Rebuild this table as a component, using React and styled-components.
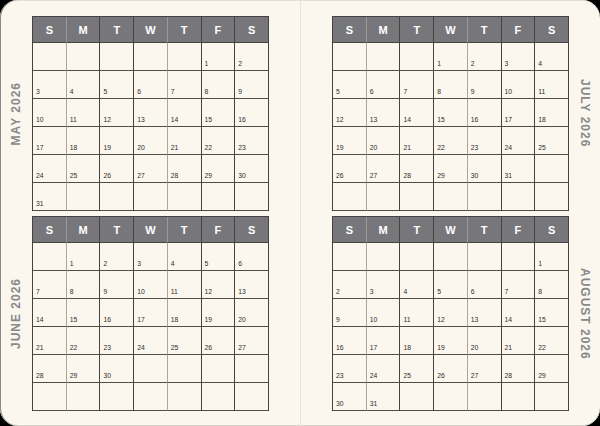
import React from "react";
import styled, { createGlobalStyle } from "styled-components";

const Global = createGlobalStyle`
  html, body { margin: 0; padding: 0; background: #000; }
  body { font-family: "Liberation Sans", Arial, sans-serif; }
  #root { width: 600px; height: 426px; }
`;

const Spread = styled.div`
  width: 600px;
  height: 426px;
  box-sizing: border-box;
  background: #fcf7ee;
  border-radius: 18px;
  display: flex;
  overflow: hidden;
  box-shadow: inset 1px 0 0 #8d8a85, inset 0 1px 0 #e4dfd6, inset 0 -1px 0 #d8d3ca;
`;

const Page = styled.div`
  width: ${(p) => p.$w}px;
  display: flex;
  flex-direction: ${(p) => (p.$side === "left" ? "row" : "row-reverse")};
  padding-${(p) => (p.$side === "left" ? "right" : "left")}: 31px;
  box-sizing: border-box;
`;

const Fold = styled.div`
  width: 1px;
  background: #e9e3d8;
`;

const LabelCol = styled.div`
  width: ${(p) => p.$w}px;
  display: flex;
  flex-direction: column;
  padding-top: 16px;
  gap: 5px;
`;

const LabelSlot = styled.div`
  height: 195px;
  display: flex;
  align-items: center;
  justify-content: center;
`;

const MonthLabel = styled.div`
  writing-mode: vertical-rl;
  transform: ${(p) => (p.$side === "left" ? "rotate(180deg)" : "none")};
  font-family: "Liberation Sans", Arial, sans-serif;
  font-weight: 700;
  font-size: 12px;
  letter-spacing: 1px;
  color: #88888b;
  white-space: nowrap;
`;

const Grids = styled.div`
  width: 237px;
  display: flex;
  flex-direction: column;
  padding-top: 16px;
  gap: 5px;
`;

const Table = styled.div`
  display: grid;
  grid-template-columns: repeat(7, 1fr);
  border-left: 1px solid #46433f;
  border-top: 1px solid #46433f;
`;

const HeadCell = styled.div`
  height: 25px;
  background: #77777b;
  color: #fff;
  font-weight: 700;
  font-size: 11px;
  display: flex;
  align-items: center;
  justify-content: center;
  border-right: 1px solid ${(p) => (p.$light ? "#9b9a98" : "#46433f")};
  border-bottom: 1px solid #46433f;
`;

const DayCell = styled.div`
  border-right: 1px solid ${(p) => (p.$light ? "#aaa69e" : "#46433f")};
  border-bottom: 1px solid #504d48;
  display: flex;
  align-items: flex-end;
  padding: 0 0 2px 3px;
  box-sizing: content-box;
  height: 25px;
  font-size: 6.8px;
  line-height: 1;
  color: #2e2c2a;
`;

const DAYS = ["S", "M", "T", "W", "T", "F", "S"];

function Month({ start, days }) {
  const cells = [];
  for (let i = 0; i < 42; i++) {
    const d = i - start + 1;
    cells.push(d >= 1 && d <= days ? d : "");
  }
  return (
    <Table>
      {DAYS.map((d, i) => (
        <HeadCell key={"h" + i} $light={i === 0 || i === 3}>
          {d}
        </HeadCell>
      ))}
      {cells.map((c, i) => (
        <DayCell key={i} $light={i % 7 === 0 || i % 7 === 3}>
          {c}
        </DayCell>
      ))}
    </Table>
  );
}

export default function App() {
  return (
    <>
      <Global />
      <Spread>
        <Page $w={300} $side="left">
          <LabelCol $w={32}>
            <LabelSlot>
              <MonthLabel $side="left">MAY 2026</MonthLabel>
            </LabelSlot>
            <LabelSlot>
              <MonthLabel $side="left">JUNE 2026</MonthLabel>
            </LabelSlot>
          </LabelCol>
          <Grids>
            <Month start={5} days={31} />
            <Month start={1} days={30} />
          </Grids>
        </Page>
        <Fold />
        <Page $w={299} $side="right">
          <LabelCol $w={31}>
            <LabelSlot>
              <MonthLabel $side="right">JULY 2026</MonthLabel>
            </LabelSlot>
            <LabelSlot>
              <MonthLabel $side="right">AUGUST 2026</MonthLabel>
            </LabelSlot>
          </LabelCol>
          <Grids>
            <Month start={3} days={31} />
            <Month start={6} days={31} />
          </Grids>
        </Page>
      </Spread>
    </>
  );
}
